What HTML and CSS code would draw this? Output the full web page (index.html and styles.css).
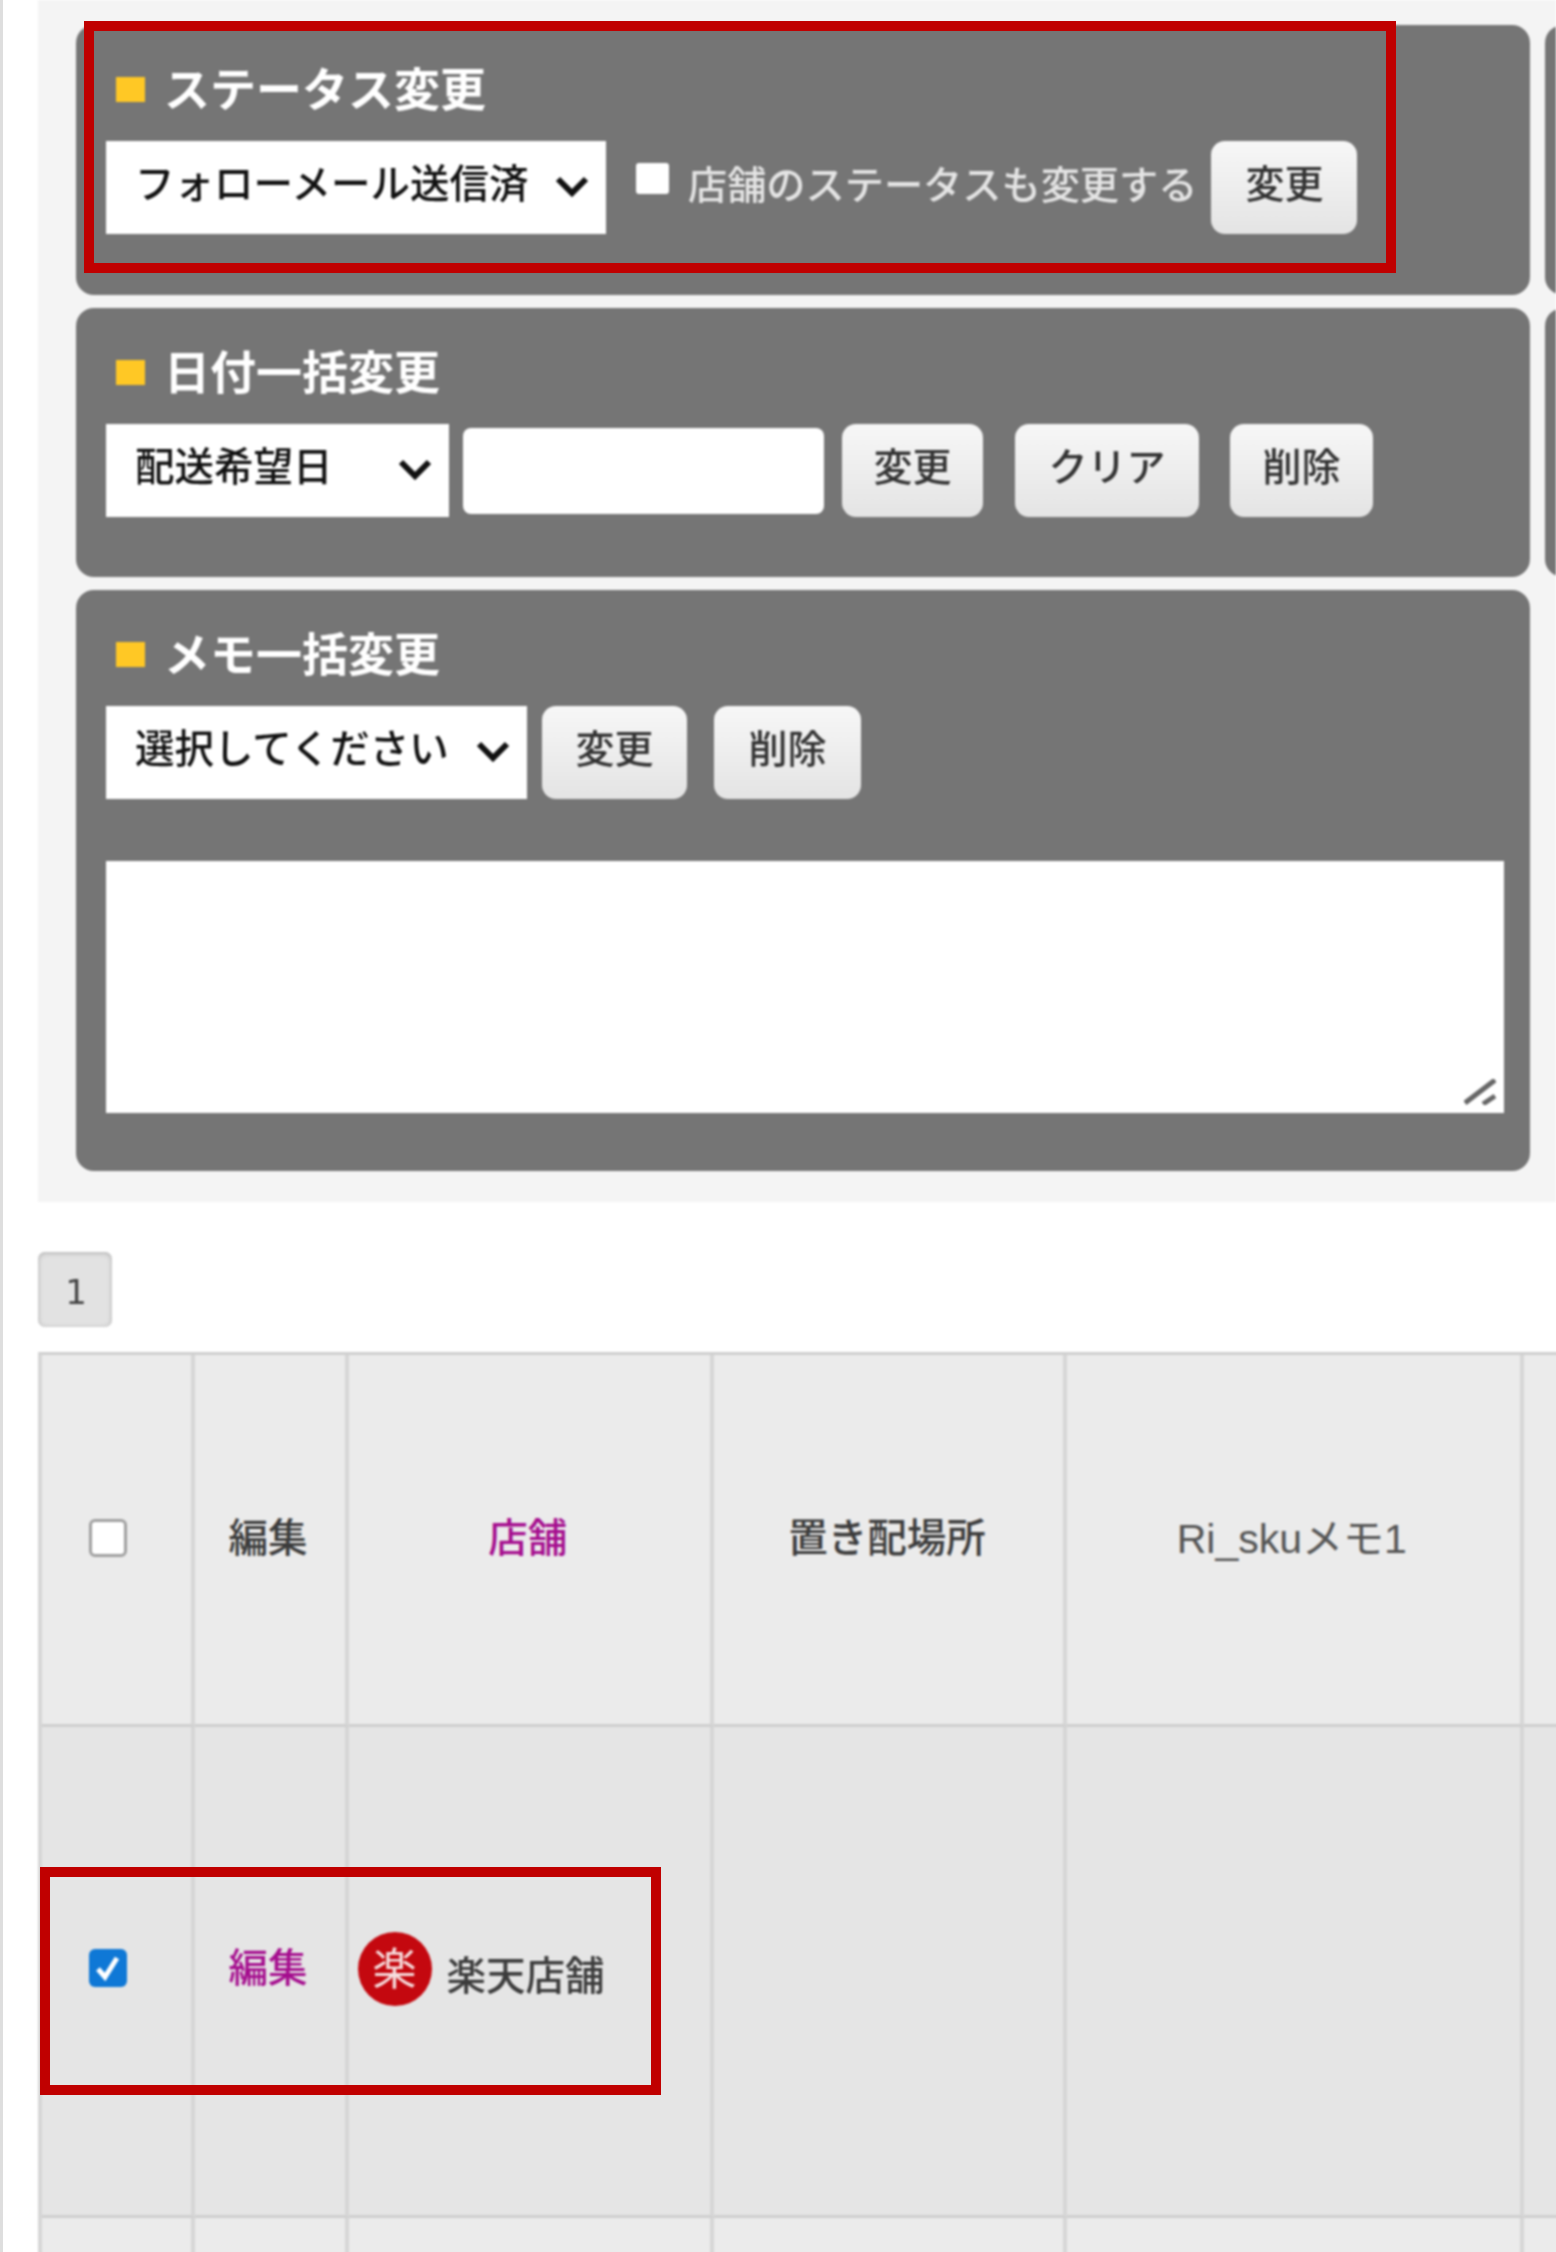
FILE: index.html
```html
<!DOCTYPE html>
<html lang="ja">
<head>
<meta charset="utf-8">
<title>一括変更</title>
<link rel="stylesheet" href="styles.css">
</head>
<body>
<div class="page">
  <section class="bulk">
    <div class="bulk-grid">
      <form class="panel panel-status">
        <h2 class="panel-title">ステータス変更</h2>
        <div class="controls">
          <div class="select-wrap sel-status">
            <select class="select"><option>フォローメール送信済</option></select>
            <svg class="chevron" viewBox="0 0 34 22"><path d="M3 4l14 14L31 4" /></svg>
          </div>
          <label class="check-label"><span class="check-box"></span><span class="check-text">店舗のステータスも変更する</span></label>
          <button type="button" class="btn btn-status">変更</button>
        </div>
      </form>
      <div class="panel panel-side"></div>
      <form class="panel panel-date">
        <h2 class="panel-title">日付一括変更</h2>
        <div class="controls">
          <div class="select-wrap sel-date">
            <select class="select"><option>配送希望日</option></select>
            <svg class="chevron" viewBox="0 0 34 22"><path d="M3 4l14 14L31 4" /></svg>
          </div>
          <input class="date-input" type="text">
          <button type="button" class="btn btn-date">変更</button>
          <button type="button" class="btn btn-clear">クリア</button>
          <button type="button" class="btn btn-del">削除</button>
        </div>
      </form>
      <div class="panel panel-side"></div>
      <form class="panel panel-memo">
        <h2 class="panel-title">メモ一括変更</h2>
        <div class="controls">
          <div class="select-wrap sel-memo">
            <select class="select"><option>選択してください</option></select>
            <svg class="chevron" viewBox="0 0 34 22"><path d="M3 4l14 14L31 4" /></svg>
          </div>
          <button type="button" class="btn btn-memo">変更</button>
          <button type="button" class="btn btn-memodel">削除</button>
        </div>
        <div class="memo-wrap">
          <textarea class="memo"></textarea>
          <svg class="grip" viewBox="0 0 32 26"><path d="M1 24L31 1M19 25L31 17" /></svg>
        </div>
      </form>
    </div>
  </section>

  <nav class="pager"><span class="page-num">1</span></nav>

  <table class="orders">
    <colgroup>
      <col class="c-check"><col class="c-edit"><col class="c-shop"><col class="c-place"><col class="c-memo"><col class="c-rest">
    </colgroup>
    <thead>
      <tr class="row-head">
        <th class="check-cell"><span class="box"></span></th>
        <th>編集</th>
        <th class="link">店舗</th>
        <th>置き配場所</th>
        <th class="latin">Ri_skuメモ1</th>
        <th></th>
      </tr>
    </thead>
    <tbody>
      <tr class="row-a">
        <td class="check-cell"><span class="box box-on"><svg viewBox="0 0 38 38"><path d="M9 20l7 8L28 9" /></svg></span></td>
        <td class="link">編集</td>
        <td class="shop-cell"><span class="shop"><span class="logo">楽</span><span class="shop-name">楽天店舗</span></span></td>
        <td></td><td></td><td></td>
      </tr>
      <tr class="row-b"><td></td><td></td><td></td><td></td><td></td><td></td></tr>
    </tbody>
  </table>

  <div class="callout callout-top"></div>
  <div class="callout callout-row"></div>
</div>
</body>
</html>
```
FILE: styles.css
```css
* { box-sizing: border-box; }
html, body { margin: 0; padding: 0; background: #fff; }
body {
  width: 1556px;
  height: 2252px;
  overflow: hidden;
  font-family: "Noto Sans CJK JP", "Liberation Sans", sans-serif;
  color: #333;
}
.page {
  position: relative;
  width: 1556px;
  height: 2252px;
  overflow: hidden;
  padding-left: 35px;
  border-left: 3px solid #dedede;
}

/* the reference is a slightly soft, upscaled capture */
.bulk, .pager, .orders { filter: blur(0.8px); }

/* bulk edit area */
.bulk {
  height: 1202px;
  background: #f4f4f4;
  padding: 25px 0 0 38px;
  overflow: hidden;
}
.bulk-grid {
  display: grid;
  grid-template-columns: 1454px 1455px;
  grid-template-rows: 270px 269px 581px;
  column-gap: 15px;
  row-gap: 13px;
}
.panel {
  background: #757575;
  border-radius: 18px;
  padding: 38px 26px 0 30px;
}
.panel-side { padding: 0; }
.panel-title {
  display: flex;
  align-items: center;
  gap: 19px;
  margin: 0 0 26px 10px;
  height: 52px;
  padding-bottom: 6px;
  color: #fff;
  font-size: 46px;
  font-weight: 700;
  line-height: 46px;
}
.panel-title::before {
  content: "";
  width: 29px;
  height: 25px;
  margin-top: 6px;
  background: #ffc825;
}
.controls {
  display: flex;
  align-items: center;
  height: 93px;
}

/* selects */
.select-wrap { position: relative; height: 93px; flex: none; }
.sel-status { width: 500px; }
.sel-date { width: 343px; }
.sel-memo { width: 421px; }
.select {
  display: block;
  width: 100%;
  height: 100%;
  border: 0;
  border-radius: 0;
  background: #fff;
  appearance: none;
  -webkit-appearance: none;
  padding: 0 0 14px 29px;
  font: 500 39.5px "Noto Sans CJK JP", sans-serif;
  color: #111;
}
.chevron {
  position: absolute;
  right: 17px;
  top: 34px;
  width: 34px;
  height: 22px;
  fill: none;
  stroke: #111;
  stroke-width: 6;
}

/* checkbox label */
.check-label {
  display: flex;
  align-items: center;
  margin-left: 30px;
  color: #e4e4e4;
  font-size: 39.2px;
  font-weight: 500;
  line-height: 52px;
  white-space: nowrap;
}
.check-box {
  width: 33px;
  height: 31px;
  background: #fff;
  border-radius: 3px;
  margin: -18px 19px 0 0;
}
.check-text { margin-bottom: 11px; }

/* buttons */
.btn {
  flex: none;
  height: 93px;
  border: 0;
  border-radius: 14px;
  background: linear-gradient(#f7f7f7, #e4e4e4);
  color: #333;
  font: 500 39px "Noto Sans CJK JP", sans-serif;
  padding: 0 0 14px;
  text-align: center;
}
.btn-status { width: 146px; margin-left: 14px; }
.btn-date { width: 141px; margin-left: 18px; }
.btn-clear { width: 184px; margin-left: 32px; }
.btn-del { width: 143px; margin-left: 31px; }
.btn-memo { width: 145px; margin-left: 15px; }
.btn-memodel { width: 147px; margin-left: 27px; }

.date-input {
  width: 361px;
  height: 86px;
  margin-left: 14px;
  border: 0;
  border-radius: 8px;
  background: #fff;
}

/* memo */
.memo-wrap {
  position: relative;
  width: 1398px;
  height: 252px;
  margin-top: 62px;
}
.memo {
  display: block;
  width: 100%;
  height: 100%;
  border: 0;
  border-radius: 0;
  background: #fff;
  resize: none;
  outline: none;
}
.grip {
  position: absolute;
  right: 8px;
  bottom: 8px;
  width: 32px;
  height: 26px;
  fill: none;
  stroke: #666;
  stroke-width: 5;
}

/* pager */
.pager {
  height: 150px;
  padding-top: 50px;
}
.page-num {
  display: block;
  width: 74px;
  height: 75px;
  padding: 3px 0 0 2px;
  border-radius: 7px;
  background: #e2e2e2;
  box-shadow: inset 0 1px 5px #adadad;
  color: #444;
  font: 400 34px/75px "DejaVu Sans", sans-serif;
  text-align: center;
}

/* table */
.orders {
  table-layout: fixed;
  border-collapse: separate;
  border-spacing: 0;
  width: 1600px;
  border-top: 3px solid #cfcfcf;
  border-left: 4px solid #d6d6d6;
}
.c-check { width: 152.5px; }
.c-edit { width: 154px; }
.c-shop { width: 365.5px; }
.c-place { width: 353px; }
.c-memo { width: 456.5px; }
.c-rest { width: 118.5px; }
.orders th, .orders td {
  padding: 0 3px 0 0;
  text-align: center;
  vertical-align: middle;
  font-size: 39.5px;
  font-weight: 500;
  color: #3c3c3c;
  border-right: 4px solid #d6d6d6;
  border-bottom: 3px solid #cfcfcf;
}
.row-head th { height: 372px; background: #ebebeb; padding-bottom: 10px; }
.row-a td { height: 491px; background: #e5e5e5; padding-bottom: 14px; }
.row-b td { height: 60px; background: #ebebeb; }
.orders .link { color: #a50d8e; }
.orders .latin { color: #555; font-family: "Liberation Sans", "Noto Sans CJK JP", sans-serif; font-size: 41px; font-weight: 400; }
.orders .check-cell { padding-right: 16px; }
.orders .shop-cell { text-align: left; padding-bottom: 4px; }
.box {
  display: inline-block;
  width: 38px;
  height: 38px;
  margin-bottom: 6px;
  border: 3px solid #a0a0a0;
  border-radius: 6px;
  background: #fff;
  vertical-align: middle;
}
.box-on { border: 0; background: #0f78d6; }
.box-on svg { display: block; fill: none; stroke: #fff; stroke-width: 5; }
.shop { display: flex; align-items: center; padding-left: 9px; }
.logo {
  flex: none;
  width: 74px;
  height: 74px;
  border-radius: 50%;
  background: #c4080f;
  color: #f6dede;
  font-size: 44px;
  font-weight: 400;
  line-height: 68px;
  text-align: center;
}
.shop-name { margin: 6px 0 0 15px; font-size: 39.5px; color: #3c3c3c; }

/* annotation frames */
.callout {
  position: absolute;
  border: 10px solid #c00000;
  pointer-events: none;
}
.callout-top { left: 81px; top: 21px; width: 1312px; height: 252px; }
.callout-row { left: 37px; top: 1867px; width: 621px; height: 228px; }
```
